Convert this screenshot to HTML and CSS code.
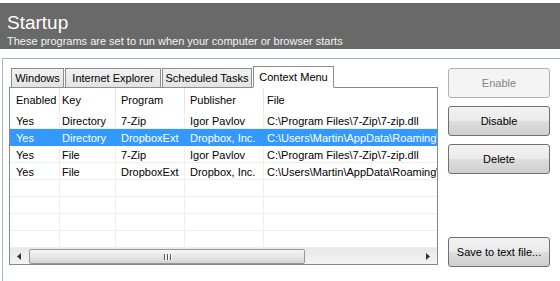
FILE: index.html
```html
<!DOCTYPE html>
<html>
<head>
<meta charset="utf-8">
<link rel="stylesheet" href="styles.css">
</head>
<body>
<div class="header">
  <div class="title">Startup</div>
  <div class="subtitle">These programs are set to run when your computer or browser starts</div>
</div>
<div class="panel">
  <div class="left">
    <div class="tabs">
      <div class="tab t1">Windows</div>
      <div class="tab t2">Internet Explorer</div>
      <div class="tab t3">Scheduled Tasks</div>
      <div class="tab t4 active">Context Menu</div>
    </div>
    <div class="list">
      <div class="grid head">
        <div class="c c1">Enabled</div><div class="c c2">Key</div><div class="c c3">Program</div><div class="c c4">Publisher</div><div class="c c5">File</div>
      </div>
      <div class="grid row">
        <div class="c c1">Yes</div><div class="c c2">Directory</div><div class="c c3">7-Zip</div><div class="c c4">Igor Pavlov</div><div class="c c5">C:\Program Files\7-Zip\7-zip.dll</div>
      </div>
      <div class="grid row sel">
        <div class="c c1">Yes</div><div class="c c2">Directory</div><div class="c c3">DropboxExt</div><div class="c c4">Dropbox, Inc.</div><div class="c c5">C:\Users\Martin\AppData\Roaming\Dropbox\bin\DropboxExt.13.dll</div>
      </div>
      <div class="grid row">
        <div class="c c1">Yes</div><div class="c c2">File</div><div class="c c3">7-Zip</div><div class="c c4">Igor Pavlov</div><div class="c c5">C:\Program Files\7-Zip\7-zip.dll</div>
      </div>
      <div class="grid row">
        <div class="c c1">Yes</div><div class="c c2">File</div><div class="c c3">DropboxExt</div><div class="c c4">Dropbox, Inc.</div><div class="c c5">C:\Users\Martin\AppData\Roaming\Dropbox\bin\DropboxExt.13.dll</div>
      </div>
      <div class="grid row"><div class="c c1"></div><div class="c c2"></div><div class="c c3"></div><div class="c c4"></div><div class="c c5"></div></div>
      <div class="grid row"><div class="c c1"></div><div class="c c2"></div><div class="c c3"></div><div class="c c4"></div><div class="c c5"></div></div>
      <div class="grid row"><div class="c c1"></div><div class="c c2"></div><div class="c c3"></div><div class="c c4"></div><div class="c c5"></div></div>
      <div class="grid row"><div class="c c1"></div><div class="c c2"></div><div class="c c3"></div><div class="c c4"></div><div class="c c5"></div></div>
      <div class="hscroll">
        <div class="arrow"><svg width="5" height="7" viewBox="0 0 5 7"><path d="M4 0 L0 3.5 L4 7 Z" fill="#333"/></svg></div>
        <div class="thumb"><span class="grip"></span><span class="grip"></span><span class="grip"></span></div>
        <div class="track"></div>
        <div class="arrow"><svg width="5" height="7" viewBox="0 0 5 7"><path d="M1 0 L5 3.5 L1 7 Z" fill="#333"/></svg></div>
      </div>
    </div>
  </div>
  <div class="buttons">
    <div class="btn disabled">Enable</div>
    <div class="btn">Disable</div>
    <div class="btn">Delete</div>
    <div class="spacer"></div>
    <div class="btn">Save to text file...</div>
  </div>
</div>
</body>
</html>
```
FILE: styles.css
```css
html, body {
  margin: 0;
  padding: 0;
  background: #ffffff;
  font-family: "Liberation Sans", Arial, sans-serif;
  font-size: 11px;
  color: #000;
  overflow: hidden;
  height: 281px;
}
.header {
  margin-top: 3px;
  height: 46px;
  background: #696969;
  color: #fff;
  padding-left: 7px;
  box-sizing: border-box;
}
.title {
  font-size: 19px;
  line-height: 19px;
  padding-top: 10px;
}
.subtitle {
  font-size: 11px;
  line-height: 13px;
  padding-top: 3px;
  color: #f4f4f4;
}
.panel {
  margin-top: 9px;
  margin-left: 2px;
  border-top: 1px solid #a9b6c2;
  border-left: 1px solid #a9b6c2;
  height: 222px;
  display: flex;
}
.left {
  padding-left: 6px;
  padding-top: 8px;
  width: 429px;
}
.tabs {
  display: flex;
  align-items: flex-end;
  padding-left: 2px;
  height: 21px;
  position: relative;
  z-index: 1;
  margin-bottom: -1px;
}
.tab {
  height: 20px;
  line-height: 19px;
  border: 1px solid #8c8e94;
  background: linear-gradient(#f2f2f2, #e3e3e3);
  margin-right: 1px;
  box-sizing: border-box;
  text-align: center;
  white-space: nowrap;
}
.t1 { width: 53px; }
.t2 { width: 96px; }
.t3 { width: 90px; margin-right: 0; }
.tab.active {
  height: 22px;
  line-height: 20px;
  background: #fff;
  border-bottom-color: #fff;
  width: 81px;
  margin-left: 1px;
  margin-right: 0;
  margin-top: -1px;
}
.list {
  border: 1px solid #828790;
  height: 178px;
  box-sizing: border-box;
  overflow: hidden;
  background: #fff;
}
.grid {
  display: grid;
  grid-template-columns: 50px 56px 69px 79px 173px;
  white-space: nowrap;
}
.c {
  overflow: hidden;
  box-sizing: border-box;
}
.c1 { padding-left: 6px; }
.c2 { padding-left: 2px; }
.c3 { padding-left: 5px; }
.c4 { padding-left: 5px; }
.c5 { padding-left: 3px; }
.head {
  height: 24px;
  line-height: 25px;
}
.head .c { border-right: 1px solid #e5e5e5; }
.head .c5 { border-right: none; }
.row {
  height: 17px;
}
.row .c {
  border-right: 1px solid #efefef;
  border-bottom: 1px solid #efefef;
  line-height: 16px;
  padding-top: 1px;
}
.row .c5 { border-right: none; }
.row.sel .c {
  background: #3399ff;
  color: #fff;
  border-color: #3399ff;
}
.hscroll {
  height: 17px;
  display: flex;
  background: linear-gradient(#e8e8e8, #f4f4f4);
}
.arrow {
  width: 19px;
  display: flex;
  align-items: center;
  justify-content: center;
}
.thumb {
  width: 276px;
  height: 15px;
  margin-top: 1px;
  border: 1px solid #979797;
  border-radius: 2px;
  box-sizing: border-box;
  background: linear-gradient(#f6f6f6, #e6e6e6 50%, #d4d4d4);
  display: flex;
  justify-content: center;
  align-items: center;
  gap: 2px;
}
.grip {
  width: 1px;
  height: 6px;
  background: #555;
  box-shadow: 1px 0 0 #fff;
}
.track { flex: 1; }
.buttons {
  padding-left: 10px;
  padding-top: 9px;
  display: flex;
  flex-direction: column;
  width: 102px;
}
.btn {
  height: 30px;
  line-height: 28px;
  box-sizing: border-box;
  border: 1px solid #707070;
  border-radius: 3px;
  text-align: center;
  background: linear-gradient(#f2f2f2 0%, #ebebeb 48%, #dddddd 52%, #cfcfcf 100%);
  margin-bottom: 8px;
  flex: none;
}
.btn.disabled {
  border-color: #adb2b5;
  background: #f4f4f4;
  color: #838383;
}
.spacer { height: 55px; flex: none; }
```
